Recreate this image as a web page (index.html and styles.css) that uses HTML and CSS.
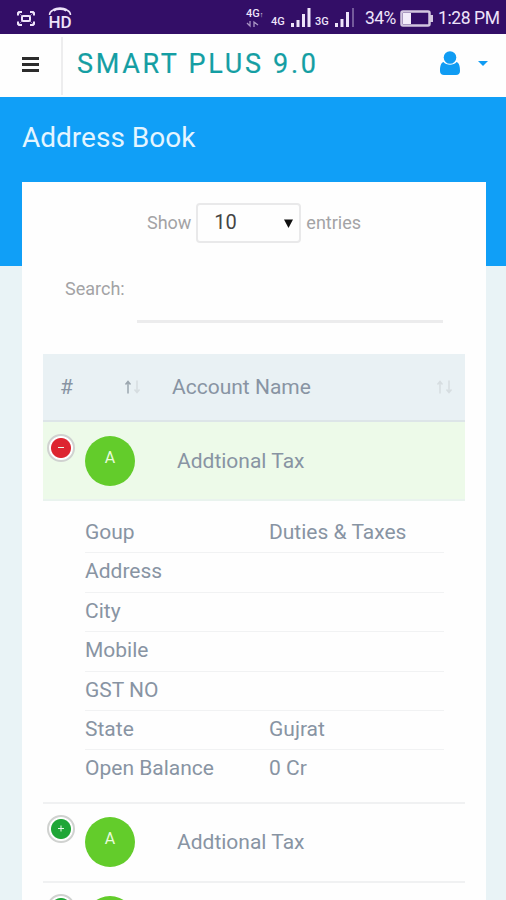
FILE: index.html
```html
<!DOCTYPE html>
<html lang="en">
<head>
	<meta charset="UTF-8">
	<meta name="viewport" content="width=device-width, initial-scale=1">
	<title>Address Book</title>
	<link rel="stylesheet" href="styles.css">
</head>
<body>

	<div class="status">
		<svg class="shot" width="20" height="17" viewBox="0 0 20 17" fill="none" stroke="#eee3fa" stroke-width="2">
			<path d="M2 5.500V3l1-1h3M14 2h3l1 1v2.500M18 11.500V14l-1 1h-3M6 15H3l-1-1v-2.500"/>
			<rect x="6" y="6" width="8" height="5" rx="1"/>
			<path d="M3 3l3 3M17 3l-3 3M3 14l3-3M17 14l-3-3" stroke-width=".8" opacity=".6"/>
		</svg>
		<div class="hd">
			<svg width="24" height="8" viewBox="0 0 24 8" fill="none" stroke="#eee3fa">
				<path d="M1.500 8C1.500 -.5 22.500 -.5 22.500 8" stroke-width="1.500"/>
				<path d="M5.500 3.200C9 1.200 15 1.200 18.500 3.200" stroke-width="2.800"/>
			</svg>
			<span>HD</span>
		</div>
		<div class="lte">
			<span>4G<small>↑</small></span>
			<svg width="14" height="8" viewBox="0 0 14 8" fill="none" stroke="#a995c4" stroke-width="1.300">
				<path d="M1 3l3 3V1M8 7V2l4 3"/>
			</svg>
		</div>
		<span class="net">4G</span>
		<svg class="bars" width="20" height="19" viewBox="0 0 20 19" fill="#eee3fa">
			<path d="M0 15h3v4H0zM5.500 12h3v7h-3zM11 6h3v13h-3zM16.500 0h3v19h-3z"/>
		</svg>
		<span class="net net2">3G</span>
		<svg class="bars" width="20" height="19" viewBox="0 0 20 19" fill="#eee3fa">
			<path d="M0 15h3v4H0zM5.500 11h3v8h-3zM11 4h3v15h-3z"/>
			<path d="M17 0h2v19h-2z" fill="#745a9b"/>
		</svg>
		<span class="pct">34%</span>
		<svg class="battery" width="34" height="17" viewBox="0 0 34 17">
			<rect x="1.500" y="1.500" width="28" height="14" rx="1.500" fill="none" stroke="#d2c6df" stroke-width="2.500"/>
			<path d="M3 3h8v11H3z" fill="#f3ecfb"/>
			<path d="M30 5h3v7h-3z" fill="#d2c6df"/>
		</svg>
		<span class="time">1:28 PM</span>
	</div>

	<div class="navbar">
		<div class="toggle"><i></i><i></i><i></i></div>
		<div class="brand">SMART PLUS 9.0</div>
		<svg class="user" width="20" height="24" viewBox="0 0 20 24" fill="#109cf3">
			<circle cx="10" cy="6.500" r="6.300"/>
			<path d="M3.500 11C0.500 12 0 16 0 20c0 2.500 1.500 4 4 4h12c2.500 0 4-1.500 4-4 0-4-.5-8-3.500-9C14 14.500 6 14.500 3.500 11z"/>
		</svg>
		<span class="caret"></span>
	</div>

	<div class="heading"><h1>Address Book</h1></div>

	<div class="card">
		<div class="length">
			<span>Show</span>
			<div class="select">
				<span>10</span>
				<svg width="9" height="9" viewBox="0 0 9 9"><path d="M0 .5h9L4.500 9z" fill="#111"/></svg>
			</div>
			<span>entries</span>
		</div>
		<div class="search">
			<label>Search:</label>
			<div class="field"></div>
		</div>

		<div class="table">
			<div class="thead">
				<span class="num">#</span>
				<svg class="sort" width="17" height="14" viewBox="0 0 17 14" fill="none" stroke="#d6dde0" stroke-width="1.500">
					<path class="on" d="M4 13.500V2M1.500 4.500L4 1.500l2.500 3"/>
					<path d="M13 .5V12M10.500 9.500L13 12.500l2.500-3"/>
				</svg>
				<span class="account">Account Name</span>
				<svg class="sort" width="17" height="14" viewBox="0 0 17 14" fill="none" stroke="#d6dde0" stroke-width="1.500">
					<path d="M4 13.500V2M1.500 4.500L4 1.500l2.500 3"/>
					<path d="M13 .5V12M10.500 9.500L13 12.500l2.500-3"/>
				</svg>
			</div>

			<div class="row open">
				<span class="btn minus"></span>
				<span class="avatar">A</span>
				<span class="name">Addtional Tax</span>
			</div>
			<ul class="detail">
				<li><span>Goup</span><span>Duties &amp; Taxes</span></li>
				<li><span>Address</span></li>
				<li><span>City</span></li>
				<li><span>Mobile</span></li>
				<li><span>GST NO</span></li>
				<li><span>State</span><span>Gujrat</span></li>
				<li><span>Open Balance</span><span>0 Cr</span></li>
			</ul>
			<div class="row">
				<span class="btn plus"></span>
				<span class="avatar">A</span>
				<span class="name">Addtional Tax</span>
			</div>
			<div class="row">
				<span class="btn plus"></span>
				<span class="avatar"></span>
			</div>
		</div>
	</div>

</body>
</html>
```

FILE: styles.css
```css
*{
	box-sizing: border-box;
}
body{
	margin: 0;
	height: 900px;
	overflow: hidden;
	background-color: #e9f3f6;
	font-family: Roboto, "Liberation Sans", sans-serif;
	color: #8894a3;
}
svg{
	display: block;
	flex: none;
}
.status{
	display: flex;
	align-items: center;
	height: 34px;
	padding: 2px 8px 0 16px;
	background-color: #330e67;
	color: #eee3fa;
	white-space: nowrap;
}
.hd{
	width: 24px;
	margin: 0 0 1px 12px;
	font-size: 17px;
	line-height: 14px;
	font-weight: 500;
	text-align: center;
}
.lte{
	width: 20px;
	margin-left: 174px;
	font-size: 11px;
	line-height: 10px;
	font-weight: 500;
}
.lte small{
	font-size: 7px;
}
.net{
	width: 14px;
	margin: 8px 6px 0 5px;
	font-size: 11px;
	line-height: 10px;
	font-weight: 500;
}
.net2{
	margin-left: 4px;
}
.bars{
	margin-bottom: 2px;
}
.pct{
	width: 33px;
	margin-left: 10px;
	font-size: 17.5px;
	letter-spacing: -.6px;
}
.battery{
	margin-left: 2px;
}
.time{
	margin-left: 4px;
	font-size: 17.5px;
	letter-spacing: -.4px;
}
.shot,.hd,.lte,.net,.pct,.time{
	flex: none;
}
.navbar{
	display: flex;
	align-items: center;
	height: 63px;
	padding-right: 18px;
	background-color: #fefefe;
}
.toggle{
	display: flex;
	flex-direction: column;
	justify-content: center;
	gap: 3px;
	width: 63px;
	height: 58px;
	padding: 0 22px 3px 22px;
	border-right: 2px solid #ededee;
}
.toggle i{
	height: 3px;
	background-color: #2c2c2c;
}
.brand{
	flex: 1;
	padding: 0 0 4px 14px;
	font-size: 27px;
	letter-spacing: 2.7px;
	-webkit-text-stroke: .2px #149ea3;
	color: #149ea3;
	white-space: nowrap;
}
.user{
	margin-bottom: 6px;
}
.caret{
	margin: 0 0 5px 18px;
	border-top: 5px solid #109cf3;
	border-left: 5.5px solid transparent;
	border-right: 5.5px solid transparent;
}
.heading{
	height: 169px;
	padding: 23px 22px 0;
	background-color: #109ff7;
}
h1{
	margin: 0;
	font-size: 28px;
	line-height: 36px;
	font-weight: 400;
	color: #e4f5ff;
}
.card{
	height: 718px;
	margin: -84px 20px 0 22px;
	padding: 21px 21px 0;
	overflow: hidden;
	background-color: #fefefe;
}
.length,.search{
	display: flex;
	font-size: 18px;
	color: #a3a3a5;
}
.length{
	align-items: center;
	justify-content: center;
	gap: 5px;
}
.length span{
	margin-bottom: 2px;
}
.select{
	display: flex;
	align-items: center;
	justify-content: space-between;
	width: 105px;
	height: 40px;
	padding: 0 6px 0 16px;
	border: 2px solid #e9e9ea;
	border-radius: 4px;
	font-size: 20px;
	color: #444;
}
.search{
	height: 45px;
	margin: 35px 22px 0;
}
.search label{
	width: 72px;
	line-height: 21px;
}
.field{
	flex: 1;
	border-bottom: 3px solid #ececed;
}
.table{
	margin-top: 31px;
	font-size: 21px;
}
.thead{
	display: flex;
	align-items: center;
	height: 68px;
	padding: 0 12px 0 17px;
	border-bottom: 2px solid #dde5e8;
	background-color: #e9f1f4;
}
.num{
	width: 64px;
}
.sort .on{
	stroke: #9ba6ae;
}
.account{
	flex: 1;
	margin-left: 31px;
}
.row{
	display: flex;
	height: 79px;
	padding: 13px 0 0 4px;
	border-bottom: 2px solid #f0f1f2;
}
.open{
	padding-top: 14px;
	border-bottom-color: #e9f3ee;
	background-color: #edfae9;
}
.btn{
	position: relative;
	width: 28px;
	height: 28px;
	margin-top: -2px;
	border: 2px solid #d0d2d0;
	border-radius: 50%;
	background: radial-gradient(circle, #1fa636 9.5px, #fefefe 10.5px);
}
.minus{
	background: radial-gradient(circle, #dd2530 9.5px, #fefefe 10.5px);
}
.btn:before,.plus:after{
	content: "";
	position: absolute;
	left: 9px;
	top: 11px;
	width: 6px;
	height: 1px;
	background-color: #e9fbe9;
}
.plus:after{
	transform: rotate(90deg);
}
.avatar{
	width: 50px;
	height: 50px;
	margin-left: 10px;
	border-radius: 50%;
	background-color: #63cc2b;
	font-size: 16px;
	line-height: 44px;
	text-align: center;
	color: #e9fbdd;
}
.name{
	margin-left: 42px;
	line-height: 50px;
}
.detail{
	height: 303px;
	margin: 0;
	padding: 13px 21px 0 42px;
	border-bottom: 2px solid #f0f1f2;
	list-style: none;
}
.detail li{
	display: flex;
	height: 39.4px;
	line-height: 37px;
	border-bottom: 1.5px solid #f1f2f3;
}
.detail li:last-child{
	border-bottom: none;
}
.detail li span:first-child{
	width: 184px;
}
```
